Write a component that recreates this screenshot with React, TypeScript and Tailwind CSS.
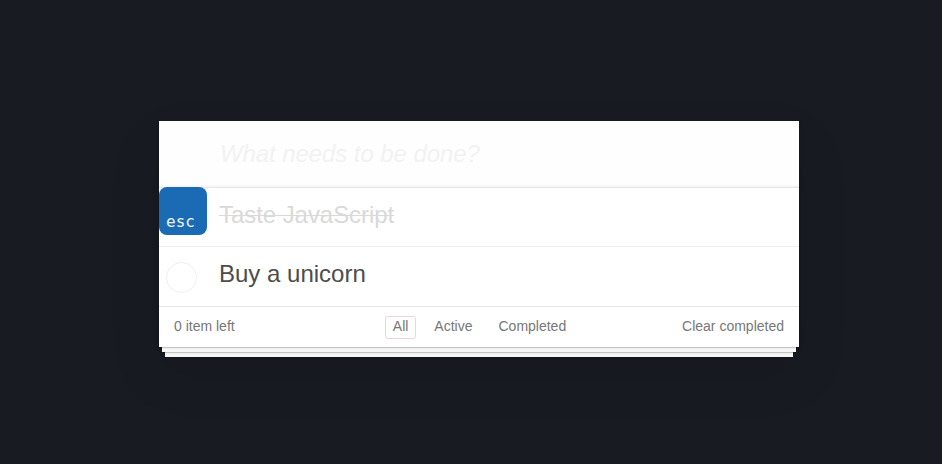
export default function App() {
  return (
    <div className="h-[464px] bg-[#181b22] pl-[159px] pt-[121px]" style={{ fontFamily: '"Liberation Sans", Arial, sans-serif' }}>
      <section className="w-[640px] bg-white text-[#4d4d4d] shadow-[0_2px_4px_0_rgba(0,0,0,0.2),0_25px_50px_0_rgba(0,0,0,0.1)]">
        <header className="h-[66px] bg-[#fefefe] pl-[61px] text-2xl italic leading-[65px] tracking-[-0.08px] text-[#f2f2f2] shadow-[inset_0_-2px_1px_rgba(0,0,0,0.03)]">What needs to be done?</header>
        <ul className="border-t border-[#e6e6e6]">
          <li className="flex h-[59px] border-b border-[#ededed]">
            <div className="-mt-px w-[60px]">
              <div className="h-12 w-12 rounded-lg bg-[#1a6ab4] pl-[7px] pt-[24px] font-['DejaVu_Sans_Mono',monospace] text-base leading-[22px] text-[#edf3f9]">esc</div>
            </div>
            <span className="text-2xl leading-[54px] tracking-[-0.06px] text-[#d9d9d9] line-through decoration-1">Taste JavaScript</span>
          </li>
          <li className="flex h-[59px]">
            <div className="w-[60px] pl-[7px] pt-[15px]">
              <div className="h-[31px] w-[31px] rounded-full border border-[#f0f0f0]" />
            </div>
            <span className="text-2xl leading-[54px]">Buy a unicorn</span>
          </li>
        </ul>
        <footer className="grid h-[41px] grid-cols-[1fr_auto_1fr] border-t border-[#e6e6e6] px-[15px] pt-[9px] text-sm leading-5 text-[#777] shadow-[0_1px_1px_rgba(0,0,0,0.2),0_8px_0_-3px_#f6f6f6,0_9px_1px_-3px_rgba(0,0,0,0.2),0_16px_0_-6px_#f6f6f6,0_17px_2px_-6px_rgba(0,0,0,0.2)]">
          <span>0 item left</span>
          <nav className="ml-px flex h-[23px] gap-[10px] leading-[19px]">
            <span className="rounded-[3px] border border-[#efd5d5] px-[7px]">All</span>
            <span className="border border-transparent px-[7px]">Active</span>
            <span className="border border-transparent px-[7px]">Completed</span>
          </nav>
          <span className="text-right">Clear completed</span>
        </footer>
      </section>
    </div>
  );
}
